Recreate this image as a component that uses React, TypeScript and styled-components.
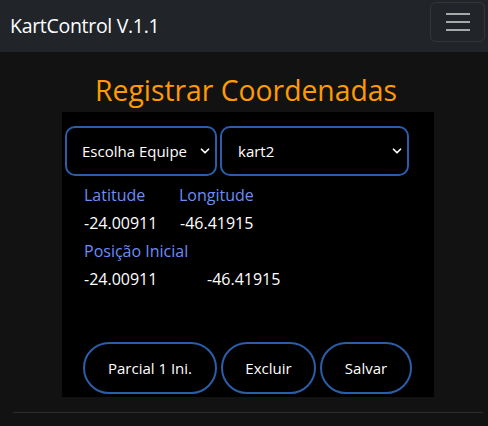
import React, { useState } from 'react';
import styled, { createGlobalStyle } from 'styled-components';
import { ChevronDown } from 'lucide-react';

const GlobalStyle = createGlobalStyle`
    body {
        margin: 0;
        background: #121212;
        font-family: "Open Sans", "Noto Sans", sans-serif;
        color: #fff;
    }
`;

const Navbar = styled.nav`
    height: 52px;
    background: #212529;
    display: flex;
    align-items: center;
    justify-content: space-between;
    padding: 0 3px 0 10px;
`;

const Brand = styled.span`
    font-size: 19.5px;
    color: #fff;
    letter-spacing: -0.3px;
    margin-top: -2px;
`;

const Toggler = styled.button`
    width: 55px;
    height: 40px;
    margin-top: -8px;
    background: transparent;
    border: 1px solid rgba(255, 255, 255, 0.08);
    border-radius: 6px;
    display: flex;
    flex-direction: column;
    align-items: center;
    justify-content: center;
    gap: 6px;
`;

const TogglerBar = styled.span`
    width: 24px;
    height: 2px;
    background: #a6a8aa;
`;

const Main = styled.main`
    padding-top: 20px;
`;

const Title = styled.h2`
    margin: 0 0 4px 4px;
    text-align: center;
    font-weight: 400;
    font-size: 28.3px;
    color: #ff9a00;
    line-height: 36px;
`;

const Panel = styled.section`
    width: 372px;
    height: 285px;
    margin-left: 62px;
    background: #000;
    padding: 14px 0 0 3px;
    box-sizing: border-box;
    display: flex;
    flex-direction: column;
`;

const SelectRow = styled.div`
    display: flex;
    gap: 3px;
`;

const SelectWrap = styled.div<{ $w: number }>`
    position: relative;
    width: ${p => p.$w}px;
`;

const Select = styled.select<{ $pad: number }>`
    appearance: none;
    width: 100%;
    height: 50px;
    background: #000;
    color: #fff;
    border: 2px solid #2a5ea8;
    border-radius: 10px;
    padding-left: ${p => p.$pad}px;
    font-family: inherit;
    font-size: 15px;
    outline: none;
`;

const Chevron = styled(ChevronDown)`
    position: absolute;
    right: 5px;
    top: 18px;
    pointer-events: none;
`;

const Info = styled.div`
    padding: 5px 0 0 19px;
    display: flex;
    flex-direction: column;
`;

const Row = styled.div<{ $col: number }>`
    display: grid;
    grid-template-columns: ${p => p.$col}px auto;
    height: 28px;
    align-items: center;
    font-size: 16px;
    white-space: nowrap;
`;

const Label = styled.span`
    color: #6d8df5;
`;

const Value = styled.span`
    color: #fff;
`;

const Buttons = styled.div`
    margin-top: auto;
    margin-bottom: 3px;
    display: flex;
    gap: 4px;
    padding-left: 18px;
`;

const PillButton = styled.button<{ $w: number }>`
    width: ${p => p.$w}px;
    height: 52px;
    background: #000;
    color: #fff;
    border: 2px solid #2a5ea8;
    border-radius: 26px;
    font-family: inherit;
    font-size: 15px;
`;

const Footer = styled.hr`
    margin: 15px 5px 0 13px;
    border: none;
    border-top: 1px solid #2c2c2c;
`;

const App = () => {
    const [team, setTeam] = useState('');
    const [kart, setKart] = useState('kart2');

    return (
        <>
            <GlobalStyle />
            <Navbar>
                <Brand>KartControl V.1.1</Brand>
                <Toggler aria-label="menu">
                    <TogglerBar />
                    <TogglerBar />
                    <TogglerBar />
                </Toggler>
            </Navbar>
            <Main>
                <Title>Registrar Coordenadas</Title>
                <Panel>
                    <SelectRow>
                        <SelectWrap $w={152}>
                            <Select $pad={15} value={team} onChange={e => setTeam(e.target.value)}>
                                <option value="">Escolha Equipe</option>
                            </Select>
                            <Chevron size={14} color="#fff" strokeWidth={3} />
                        </SelectWrap>
                        <SelectWrap $w={189}>
                            <Select $pad={16} value={kart} onChange={e => setKart(e.target.value)}>
                                <option value="kart1">kart1</option>
                                <option value="kart2">kart2</option>
                            </Select>
                            <Chevron size={14} color="#fff" strokeWidth={3} />
                        </SelectWrap>
                    </SelectRow>
                    <Info>
                        <Row $col={95}>
                            <Label>Latitude</Label>
                            <Label>Longitude</Label>
                        </Row>
                        <Row $col={96}>
                            <Value>-24.00911</Value>
                            <Value>-46.41915</Value>
                        </Row>
                        <Row $col={200}>
                            <Label>Posição Inicial</Label>
                        </Row>
                        <Row $col={123}>
                            <Value>-24.00911</Value>
                            <Value>-46.41915</Value>
                        </Row>
                    </Info>
                    <Buttons>
                        <PillButton $w={134}>Parcial 1 Ini.</PillButton>
                        <PillButton $w={95}>Excluir</PillButton>
                        <PillButton $w={92}>Salvar</PillButton>
                    </Buttons>
                </Panel>
                <Footer />
            </Main>
        </>
    );
};

export default App;
